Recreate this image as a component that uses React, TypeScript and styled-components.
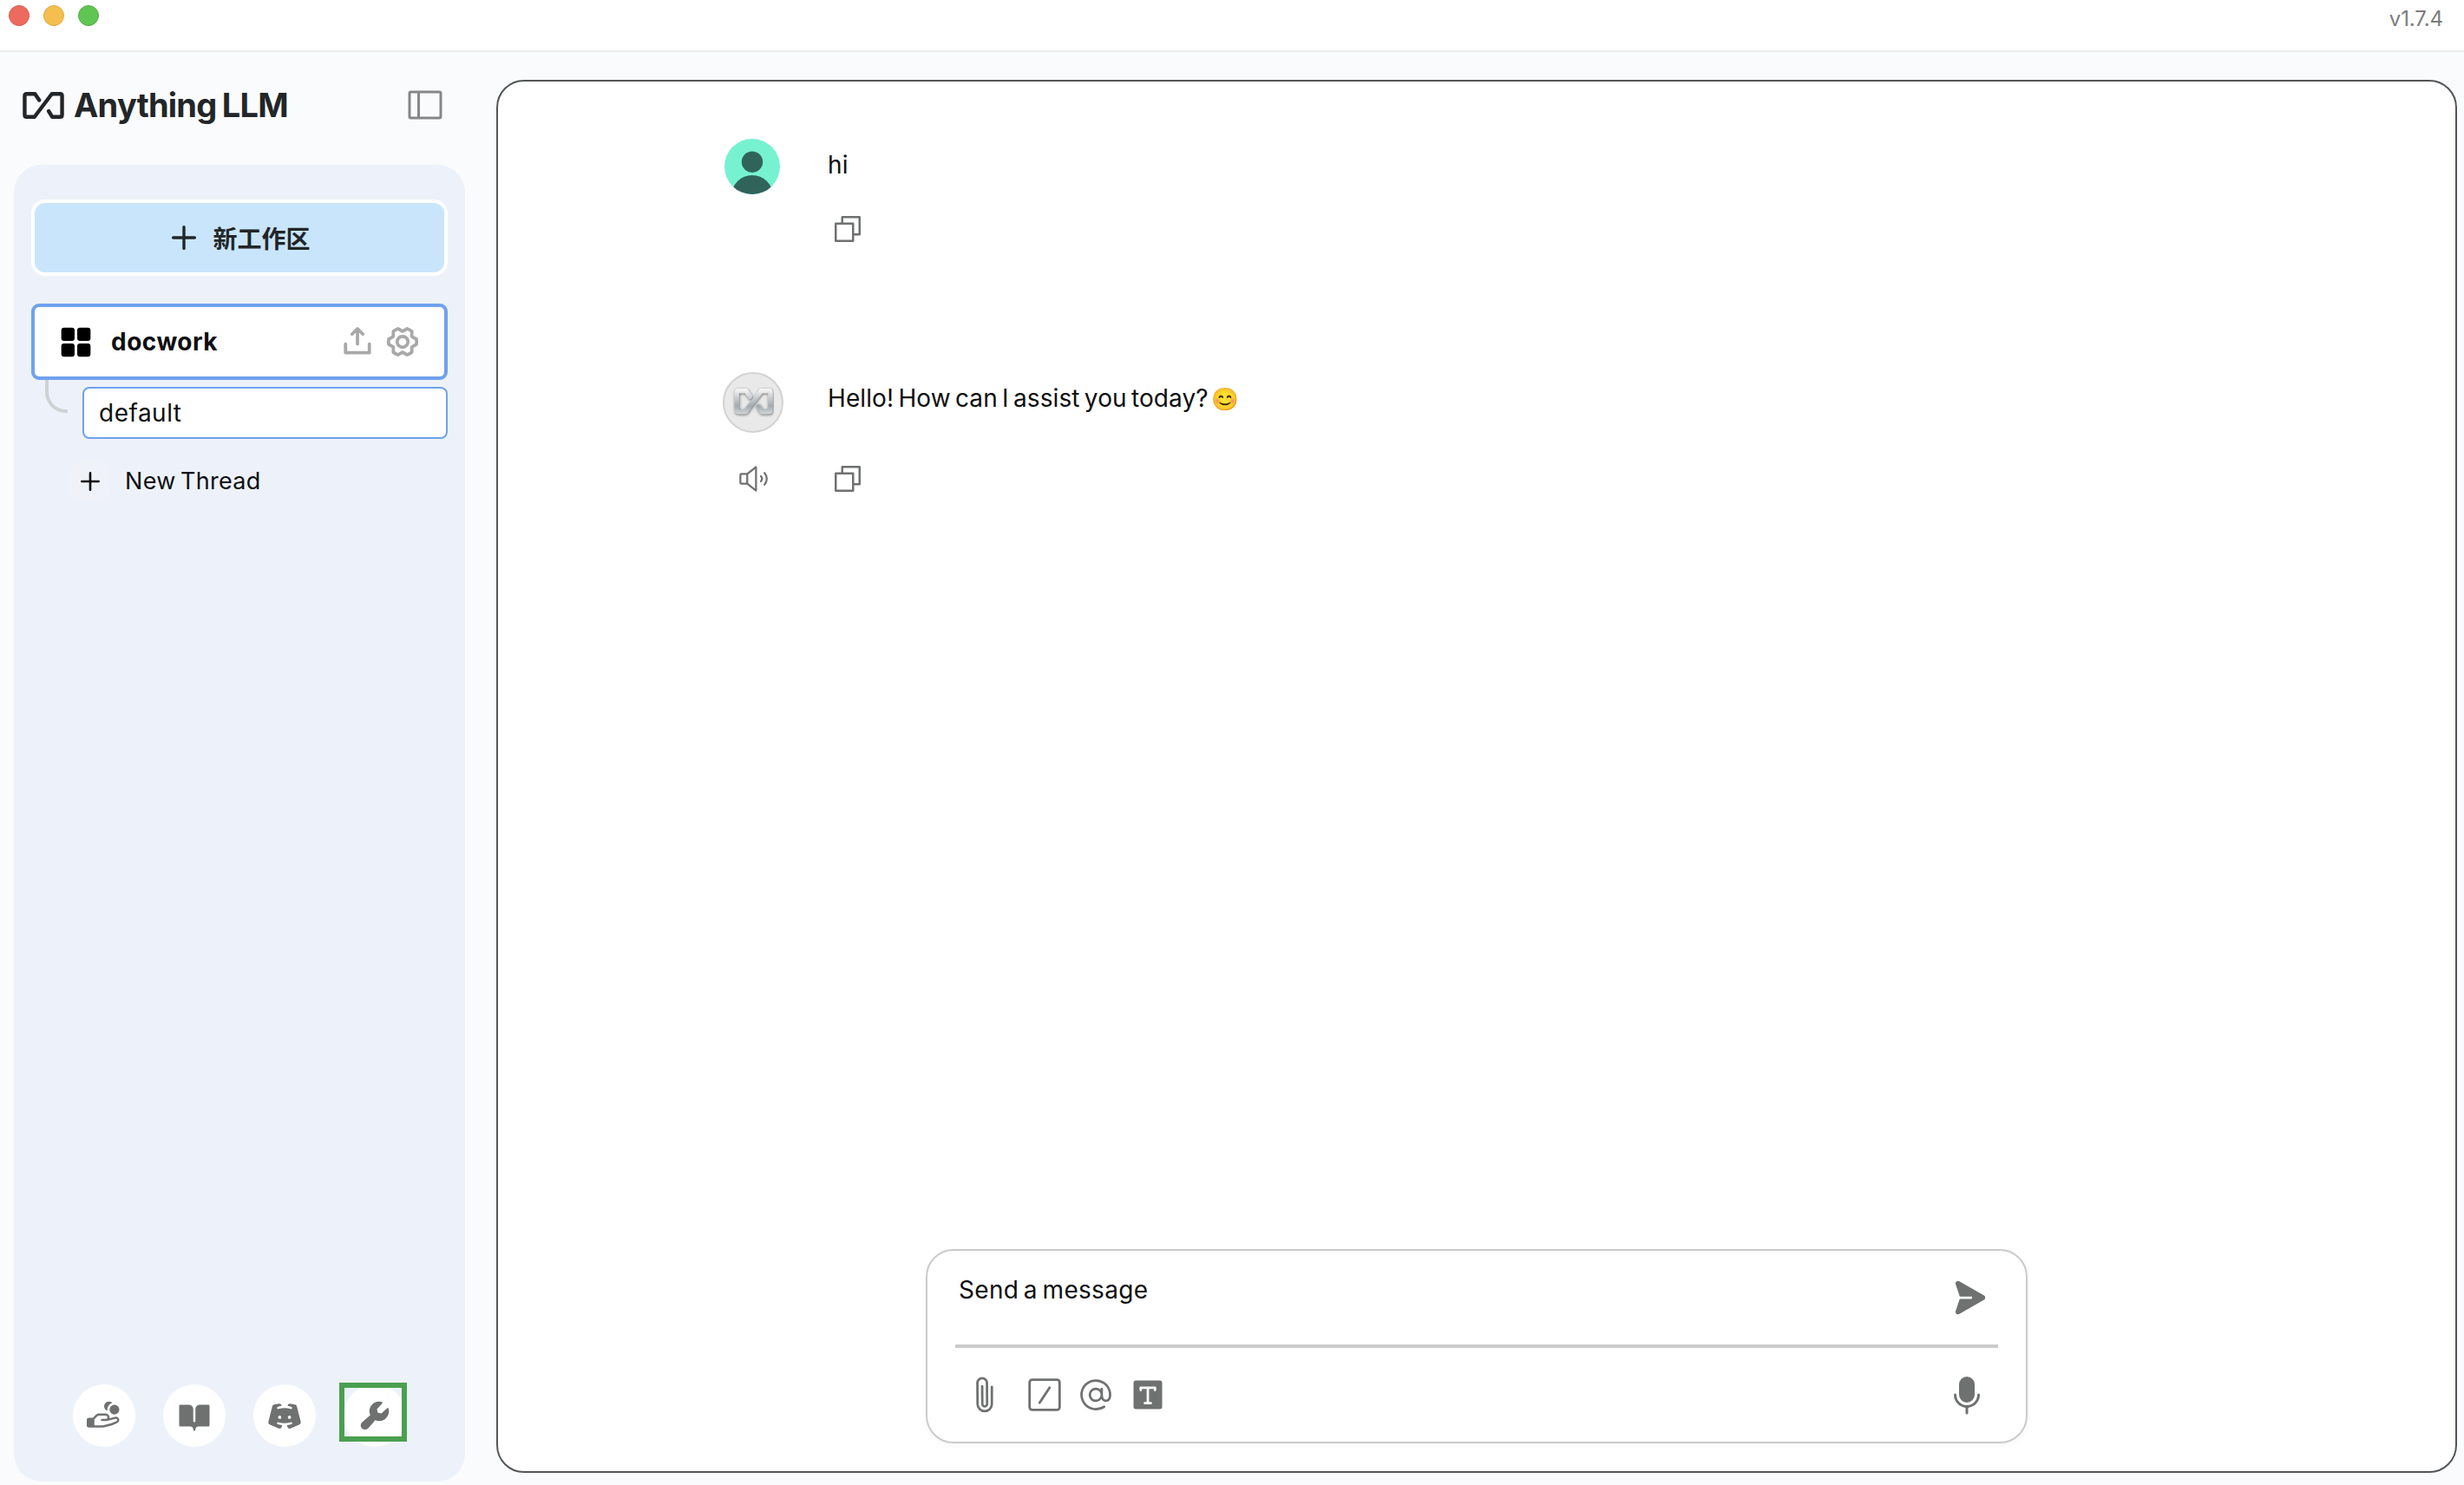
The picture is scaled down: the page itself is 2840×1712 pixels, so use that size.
import React from 'react';
import styled, { createGlobalStyle } from 'styled-components';
import {
  PiAt,
  PiBookOpenFill,
  PiCopy,
  PiDiscordLogoFill,
  PiGearSixBold,
  PiHandCoinsFill,
  PiMicrophoneFill,
  PiPaperclip,
  PiPaperPlaneRightFill,
  PiPlusBold,
  PiSidebarSimple,
  PiSpeakerHigh,
  PiSquaresFourFill,
  PiTextTFill,
  PiUploadSimpleBold,
  PiWrenchFill,
} from 'react-icons/pi';

const GlobalStyle = createGlobalStyle`
  *, *::before, *::after { box-sizing: border-box; }
  body {
    margin: 0;
    background: #fafbfd;
    font-family: Inter, 'Noto Sans CJK SC', 'Liberation Sans', sans-serif;
    font-size: 28px;
    line-height: 40px;
    color: #0e0f0f;
  }
  svg { display: block; flex: none; }
  button { border: 0; margin: 0; padding: 0; background: none; font: inherit; color: inherit; }
`;

const Window = styled.div`
  display: flex;
  flex-direction: column;
  width: 2840px;
  height: 1712px;
  overflow: hidden;
`;

const TitleBar = styled.header`
  display: flex;
  justify-content: space-between;
  height: 60px;
  padding: 6px 24px 0 10px;
  background: #fff;
  border-bottom: 2px solid #ececee;
`;

const Lights = styled.div`
  display: flex;
  gap: 16px;
`;

const Light = styled.span<{ $color: string; $edge: string }>`
  width: 24px;
  height: 24px;
  border-radius: 50%;
  border: 1px solid ${(p) => p.$edge};
  background: ${(p) => p.$color};
`;

const Version = styled.span`
  font-size: 24px;
  line-height: 31px;
  letter-spacing: -0.1px;
  color: #7b7c7c;
`;

const Body = styled.div`
  display: flex;
  flex: 1;
  min-height: 0;
`;

const Sidebar = styled.aside`
  display: flex;
  flex-direction: column;
  width: 572px;
  padding: 0 36px 4px 16px;
`;

const Brand = styled.div`
  display: flex;
  align-items: center;
  height: 122px;
  margin-bottom: 8px;
  padding: 0 22px 0 10px;
`;

const BrandName = styled.h1`
  flex: 1;
  margin: 0 0 0 11px;
  font-size: 38px;
  line-height: 48px;
  font-weight: 650;
  letter-spacing: -0.75px;
  word-spacing: -2px;
  color: #222628;
`;

const ToggleButton = styled.button`
  color: #868787;
`;

const Panel = styled.div`
  display: flex;
  flex-direction: column;
  flex: 1;
  padding: 40px 20px;
  border-radius: 32px;
  background: #edf2fa;
`;

const NewWorkspace = styled.button`
  display: flex;
  align-items: center;
  justify-content: center;
  gap: 15px;
  height: 88px;
  border: 4px solid #fff;
  border-radius: 16px;
  background: #c9e5fb;
  color: #222628;
  font-family: 'Noto Sans CJK SC', sans-serif;
  font-weight: 700;
`;

const Workspace = styled.div`
  display: flex;
  align-items: center;
  height: 88px;
  margin-top: 32px;
  padding: 0 28px 0 23px;
  border: 4px solid #6fa1ee;
  border-radius: 9px;
  background: #fff;
  color: #000;
`;

const WorkspaceName = styled.span`
  flex: 1;
  margin-left: 16px;
  font-weight: 700;
  letter-spacing: 0.5px;
  color: #0e0f0f;
`;

const WorkspaceActions = styled.div`
  display: flex;
  gap: 12px;
  color: #a8a8a8;
`;

const Threads = styled.div`
  display: flex;
  flex-direction: column;
  flex: 1;
`;

const ThreadRow = styled.div`
  display: flex;
  align-items: flex-start;
  padding-left: 16px;
`;

const Branch = styled.span`
  width: 26px;
  height: 38px;
  margin-right: 17px;
  border-left: 4px solid #cfd2d5;
  border-bottom: 4px solid #cfd2d5;
  border-bottom-left-radius: 24px;
`;

const Thread = styled.div`
  display: flex;
  align-items: center;
  flex: 1;
  height: 60px;
  margin-top: 8px;
  padding-left: 17px;
  border: 2px solid #6fa1ee;
  border-radius: 8px;
  background: #fff;
  letter-spacing: 0.5px;
`;

const NewThread = styled.button`
  display: flex;
  align-items: center;
  gap: 17px;
  height: 48px;
  margin: 25px 0 0 45px;
  font-size: 27px;
  letter-spacing: 0.3px;
  word-spacing: -2.5px;
`;

const PlusDisc = styled.span`
  display: flex;
  align-items: center;
  justify-content: center;
  width: 46px;
  height: 46px;
  border-radius: 12px;
  background: #eff3f9;
`;

const FooterLinks = styled.nav`
  display: flex;
  gap: 32px;
  padding-left: 48px;
`;

const FooterLink = styled.a`
  position: relative;
  display: flex;
  align-items: center;
  justify-content: center;
  width: 72px;
  height: 72px;
  border-radius: 50%;
  background: #fff;
  color: #6f7170;
`;

const Highlight = styled.span`
  position: absolute;
  left: -5px;
  top: -2px;
  width: 78px;
  height: 68px;
  border: 6px solid #4b9f50;
`;

const Chat = styled.main`
  display: flex;
  flex-direction: column;
  justify-content: space-between;
  align-items: center;
  width: 2260px;
  height: 1606px;
  margin-top: 32px;
  padding-bottom: 32px;
  border: 2px solid #535556;
  border-radius: 32px;
  background: #fff;
`;

const History = styled.div`
  align-self: stretch;
  padding: 66px 0 0 259px;
`;

const Message = styled.article<{ $rowGap: number; $after?: number }>`
  display: grid;
  grid-template-columns: 70px 1fr;
  column-gap: 51px;
  row-gap: ${(p) => p.$rowGap}px;
  margin-bottom: ${(p) => p.$after ?? 0}px;
  color: #6f7170;
`;

const AvatarCell = styled.div`
  display: flex;
  align-items: center;
  padding-left: 2px;
`;

const BotAvatar = styled.div`
  display: flex;
  align-items: center;
  justify-content: center;
  width: 70px;
  height: 70px;
  margin-left: -2px;
  border: 2px solid #d2d2d2;
  border-radius: 50%;
  background: #e9e9e9;
`;

const MessageText = styled.p`
  margin: 10px 0 0;
  color: #0e0f0f;
  letter-spacing: 0.1px;
  word-spacing: -2.7px;
`;

const Emoji = styled.span`
  display: inline-block;
  margin-left: 3px;
  font-size: 25.5px;
  line-height: 30px;
`;

const ActionCell = styled.div`
  display: flex;
  align-items: center;
  height: 40px;
`;

const SpeakCell = styled(ActionCell)`
  justify-content: center;
`;

const CopyButton = styled.button`
  margin-left: 3px;
`;

const Composer = styled.form`
  display: flex;
  flex-direction: column;
  width: 1270px;
  height: 224px;
  border: 2px solid #cbcbcb;
  border-radius: 32px;
  background: #fff;
  box-shadow: 0 2px 6px rgba(0, 0, 0, 0.04);
  color: #6f7170;
`;

const InputRow = styled.div`
  display: flex;
  align-items: flex-start;
  justify-content: space-between;
  height: 108px;
  padding: 25px 44px 0 36px;
`;

const Placeholder = styled.span`
  color: #0e0f0f;
  letter-spacing: 0.3px;
  word-spacing: -2.5px;
`;

const SendButton = styled.button`
  margin-top: 7px;
`;

const Divider = styled.hr`
  width: 1202px;
  height: 4px;
  margin: 0 auto;
  border: 0;
  background: #cbcbcb;
`;

const ToolRow = styled.div`
  display: flex;
  align-items: center;
  height: 108px;
  padding: 0 44px 0 43px;
`;

const Tool = styled.button<{ $before?: number; $tilt?: number }>`
  margin-left: ${(p) => p.$before ?? 0}px;
  transform: rotate(${(p) => p.$tilt ?? 0}deg);
`;

const MicButton = styled.button`
  margin-left: auto;
`;

const LOOP = 'M19 9.5 L14 2.2 H4.5 Q2.2 2.2 2.2 4.5 V26.500 Q2.2 28.800 4.5 28.800 H13.500 L33.500 2.2 H43 Q45.300 2.2 45.300 4.500 V26.500 Q45.300 28.800 43 28.800 H34 L29.800 22';

const BrandLogo = () => (
  <svg width="48" height="31" viewBox="0 0 47.5 31" fill="none">
    <path d={LOOP} stroke="#222628" strokeWidth="4.4" strokeLinecap="round" strokeLinejoin="round" />
  </svg>
);

const MetalLogo = () => (
  <svg width="48" height="36" viewBox="-3.500 -3 53 40" fill="none">
    <defs>
      <linearGradient id="metal" gradientUnits="userSpaceOnUse" x1="0" y1="0" x2="0" y2="31">
        <stop offset="0" stopColor="#f6f6f6" />
        <stop offset="0.35" stopColor="#c9cdd0" />
        <stop offset="0.7" stopColor="#a3abb0" />
        <stop offset="1" stopColor="#ced2d5" />
      </linearGradient>
      <filter id="drop" x="-20%" y="-20%" width="140%" height="150%">
        <feDropShadow dx="0.5" dy="1" stdDeviation="1.5" floodColor="#333" floodOpacity="0.75" />
      </filter>
    </defs>
    <path d={LOOP} stroke="url(#metal)" strokeWidth="5.8" strokeLinecap="round" strokeLinejoin="round" filter="url(#drop)" />
  </svg>
);

const UserAvatar = () => (
  <svg width="64" height="64" viewBox="0 0 64 64">
    <clipPath id="disc">
      <circle cx="32" cy="32" r="32" />
    </clipPath>
    <g clipPath="url(#disc)">
      <rect width="64" height="64" fill="#77f2d1" />
      <circle cx="32" cy="26.700" r="12.200" fill="#30645a" />
      <circle cx="32" cy="66" r="24" fill="#30645a" />
    </g>
  </svg>
);

const SlashSquare = () => (
  <svg width="44" height="44" viewBox="0 0 44 44" fill="none" stroke="currentColor" strokeLinecap="round">
    <rect x="4.700" y="4.700" width="34.600" height="34.600" rx="3" strokeWidth="2.800" />
    <path d="M16.200 31.200 L27.800 13.800" strokeWidth="2.800" />
  </svg>
);

export default function App() {
  return (
    <Window>
      <GlobalStyle />
      <TitleBar>
        <Lights>
          <Light $color="#ec6a5e" $edge="#d9594e" />
          <Light $color="#f4bf4f" $edge="#dfa63c" />
          <Light $color="#61c554" $edge="#50ae42" />
        </Lights>
        <Version>v1.7.4</Version>
      </TitleBar>
      <Body>
        <Sidebar>
          <Brand>
            <BrandLogo />
            <BrandName>Anything LLM</BrandName>
            <ToggleButton aria-label="Toggle sidebar">
              <PiSidebarSimple size={48} />
            </ToggleButton>
          </Brand>
          <Panel>
            <NewWorkspace>
              <PiPlusBold size={36} />
              新工作区
            </NewWorkspace>
            <Workspace>
              <PiSquaresFourFill size={49} />
              <WorkspaceName>docwork</WorkspaceName>
              <WorkspaceActions>
                <PiUploadSimpleBold size={40} />
                <PiGearSixBold size={40} />
              </WorkspaceActions>
            </Workspace>
            <Threads>
              <ThreadRow>
                <Branch />
                <Thread>default</Thread>
              </ThreadRow>
              <NewThread>
                <PlusDisc>
                  <PiPlusBold size={28} />
                </PlusDisc>
                New Thread
              </NewThread>
            </Threads>
            <FooterLinks>
              <FooterLink>
                <PiHandCoinsFill size={40} />
              </FooterLink>
              <FooterLink>
                <PiBookOpenFill size={40} />
              </FooterLink>
              <FooterLink>
                <PiDiscordLogoFill size={40} />
              </FooterLink>
              <FooterLink>
                <PiWrenchFill size={40} />
                <Highlight />
              </FooterLink>
            </FooterLinks>
          </Panel>
        </Sidebar>
        <Chat>
          <History>
            <Message $rowGap={20} $after={145}>
              <AvatarCell>
                <UserAvatar />
              </AvatarCell>
              <MessageText>hi</MessageText>
              <SpeakCell />
              <ActionCell>
                <CopyButton aria-label="Copy">
                  <PiCopy size={40} />
                </CopyButton>
              </ActionCell>
            </Message>
            <Message $rowGap={33}>
              <AvatarCell>
                <BotAvatar>
                  <MetalLogo />
                </BotAvatar>
              </AvatarCell>
              <MessageText>
                Hello! How can I assist you today?<Emoji>😊</Emoji>
              </MessageText>
              <SpeakCell>
                <PiSpeakerHigh size={36} />
              </SpeakCell>
              <ActionCell>
                <CopyButton aria-label="Copy">
                  <PiCopy size={40} />
                </CopyButton>
              </ActionCell>
            </Message>
          </History>
          <Composer>
            <InputRow>
              <Placeholder>Send a message</Placeholder>
              <SendButton type="button" aria-label="Send">
                <PiPaperPlaneRightFill size={44} />
              </SendButton>
            </InputRow>
            <Divider />
            <ToolRow>
              <Tool type="button" $tilt={-45}>
                <PiPaperclip size={44} />
              </Tool>
              <Tool type="button" $before={26}>
                <SlashSquare />
              </Tool>
              <Tool type="button" $before={15}>
                <PiAt size={44} />
              </Tool>
              <Tool type="button" $before={16}>
                <PiTextTFill size={44} />
              </Tool>
              <MicButton type="button" aria-label="Dictate">
                <PiMicrophoneFill size={48} />
              </MicButton>
            </ToolRow>
          </Composer>
        </Chat>
      </Body>
    </Window>
  );
}
